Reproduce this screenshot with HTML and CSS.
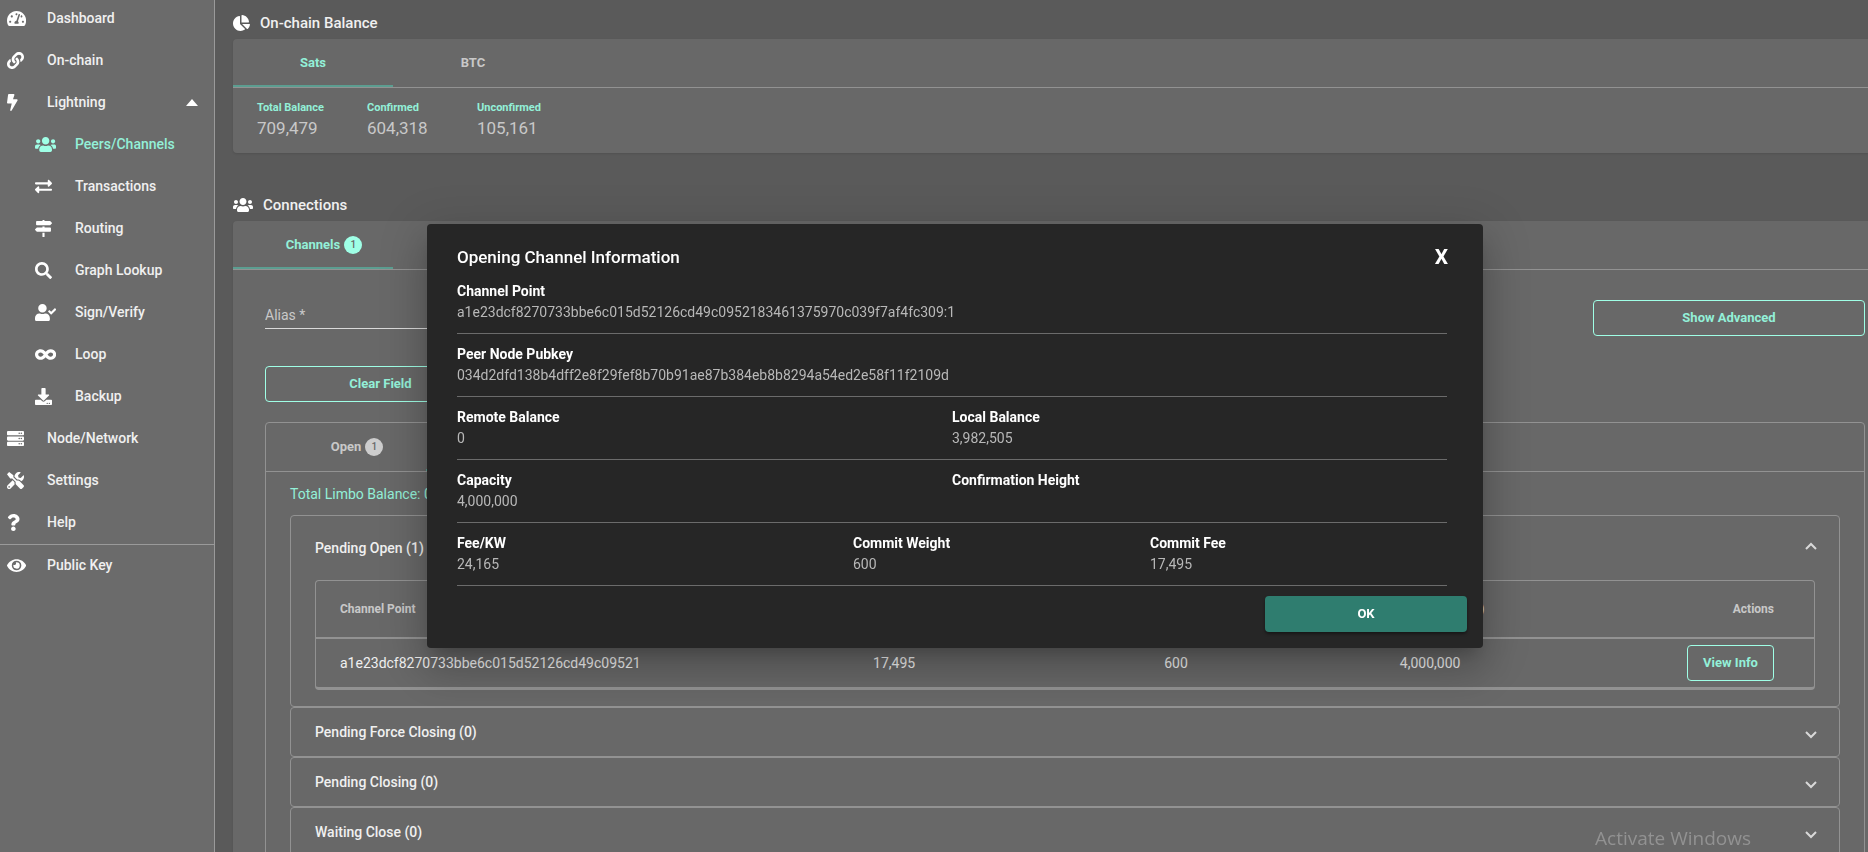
FILE: index.html
```html
<!DOCTYPE html>
<html lang="en">
<head>
<meta charset="utf-8">
<title>Peers/Channels</title>
<link rel="stylesheet" href="styles.css">
</head>
<body>
<div class="app">
  <nav class="sidebar">
    <a class="nav-item" href="#"><span class="nav-icon"><svg class="icon" viewBox="0 0 576 512"><path d="M288 32C128.94 32 0 160.94 0 320c0 52.8 14.25 102.26 39.06 144.8 5.61 9.62 16.3 15.2 27.44 15.2h443c11.14 0 21.83-5.58 27.44-15.2C561.75 422.26 576 372.8 576 320c0-159.06-128.94-288-288-288zm0 64c14.71 0 26.58 10.13 30.32 23.65-1.11 2.26-2.64 4.23-3.45 6.67l-9.22 27.67c-5.13 3.49-10.97 6.01-17.64 6.01-17.67 0-32-14.33-32-32S270.33 96 288 96zM96 384c-17.67 0-32-14.33-32-32s14.33-32 32-32 32 14.33 32 32-14.33 32-32 32zm48-160c-17.67 0-32-14.33-32-32s14.33-32 32-32 32 14.33 32 32-14.33 32-32 32zm246.77-72.41l-61.33 184C343.13 347.33 352 364.54 352 384c0 11.72-3.38 22.55-8.88 32H232.88c-5.5-9.45-8.88-20.28-8.88-32 0-33.94 26.5-61.43 59.9-63.59l61.34-184.01c4.17-12.56 17.73-19.45 30.36-15.17 12.57 4.19 19.35 17.79 15.17 30.36zm14.66 57.2l15.52-46.55c3.47-1.29 7.13-2.23 11.05-2.23 17.67 0 32 14.33 32 32s-14.33 32-32 32c-11.38-.01-20.89-6.28-26.57-15.22zM480 384c-17.67 0-32-14.33-32-32s14.33-32 32-32 32 14.33 32 32-14.33 32-32 32z"/></svg></span>Dashboard</a>
    <a class="nav-item" href="#"><span class="nav-icon"><svg class="icon" viewBox="0 0 512 512"><path d="M326.612 185.391c59.747 59.809 58.927 155.698.36 214.59-.11.12-.24.25-.36.37l-67.2 67.2c-59.27 59.27-155.699 59.262-214.96 0-59.27-59.26-59.27-155.7 0-214.96l37.106-37.106c9.84-9.84 26.786-3.3 27.294 10.606.648 17.722 3.826 35.527 9.69 52.721 1.986 5.822.567 12.262-3.783 16.612l-13.087 13.087c-28.026 28.026-28.905 73.66-1.155 101.96 28.024 28.579 74.086 28.749 102.325.51l67.2-67.19c28.191-28.191 28.073-73.757 0-101.83-3.701-3.694-7.429-6.564-10.341-8.569a16.037 16.037 0 0 1-6.947-12.606c-.396-10.567 3.348-21.456 11.698-29.806l21.054-21.055c5.521-5.521 14.182-6.199 20.584-1.731a152.482 152.482 0 0 1 20.522 17.197zM467.547 44.449c-59.261-59.262-155.69-59.27-214.96 0l-67.2 67.2c-.12.12-.25.25-.36.37-58.566 58.892-59.387 154.781.36 214.59a152.454 152.454 0 0 0 20.521 17.196c6.402 4.468 15.064 3.789 20.584-1.731l21.054-21.055c8.35-8.35 12.094-19.239 11.698-29.806a16.037 16.037 0 0 0-6.947-12.606c-2.912-2.005-6.64-4.875-10.341-8.569-28.073-28.073-28.191-73.639 0-101.83l67.2-67.19c28.239-28.239 74.3-28.069 102.325.51 27.75 28.3 26.872 73.934-1.155 101.96l-13.087 13.087c-4.35 4.35-5.769 10.79-3.783 16.612 5.864 17.194 9.042 34.999 9.69 52.721.509 13.906 17.454 20.446 27.294 10.606l37.106-37.106c59.271-59.259 59.271-155.699.001-214.959z"/></svg></span>On-chain</a>
    <a class="nav-item" href="#"><span class="nav-icon"><svg class="icon" viewBox="0 0 320 512"><path d="M296 160H180.6l42.6-129.8C227.2 15 215.7 0 200 0H56C44 0 33.8 8.9 32.2 20.8l-32 240C-1.7 275.2 9.5 288 24 288h118.7L96.6 482.5c-3.6 15.2 8 29.5 23.3 29.5 8.4 0 16.4-4.4 20.8-12l176-304c9.3-15.9-2.2-36-20.7-36z"/></svg></span>Lightning<svg class="caret" viewBox="0 0 12 7"><path d="M0 7L6 0l6 7z"/></svg></a>
    <a class="nav-item sub active" href="#"><span class="nav-icon"><svg class="icon" viewBox="0 0 640 512"><path d="M96 224c35.3 0 64-28.7 64-64s-28.7-64-64-64-64 28.7-64 64 28.7 64 64 64zm448 0c35.3 0 64-28.7 64-64s-28.7-64-64-64-64 28.7-64 64 28.7 64 64 64zm32 32h-64c-17.6 0-33.5 7.1-45.1 18.6 40.3 22.1 68.9 62 75.1 109.4h66c17.7 0 32-14.3 32-32v-32c0-35.3-28.7-64-64-64zm-256 0c61.9 0 112-50.1 112-112S381.9 32 320 32 208 82.1 208 144s50.1 112 112 112zm76.8 32h-8.3c-20.8 10-43.9 16-68.5 16s-47.6-6-68.5-16h-8.3C179.6 288 128 339.6 128 403.2V432c0 26.5 21.5 48 48 48h288c26.5 0 48-21.5 48-48v-28.8c0-63.6-51.6-115.2-115.2-115.2zm-223.7-13.4C161.5 263.1 145.6 256 128 256H64c-35.3 0-64 28.7-64 64v32c0 17.7 14.3 32 32 32h65.9c6.3-47.4 34.9-87.3 75.2-109.4z"/></svg></span>Peers/Channels</a>
    <a class="nav-item sub" href="#"><span class="nav-icon"><svg class="icon" viewBox="0 0 512 512"><path d="M0 168v-16c0-13.255 10.745-24 24-24h360V80c0-21.367 25.899-32.042 40.971-16.971l80 80c9.372 9.373 9.372 24.569 0 33.941l-80 80C409.956 271.982 384 261.456 384 240v-48H24c-13.255 0-24-10.745-24-24zm488 152H128v-48c0-21.314-25.862-32.08-40.971-16.971l-80 80c-9.372 9.373-9.372 24.569 0 33.941l80 80C102.057 463.997 128 453.437 128 432v-48h360c13.255 0 24-10.745 24-24v-16c0-13.255-10.745-24-24-24z"/></svg></span>Transactions</a>
    <a class="nav-item sub" href="#"><span class="nav-icon"><svg class="icon" viewBox="0 0 512 512"><path d="M507.31 84.69L464 41.37c-6-6-14.14-9.37-22.63-9.37H288V16c0-8.84-7.16-16-16-16h-32c-8.84 0-16 7.16-16 16v16H56c-13.25 0-24 10.75-24 24v80c0 13.25 10.75 24 24 24h385.37c8.49 0 16.62-3.37 22.63-9.37l43.31-43.31c6.25-6.26 6.25-16.38 0-22.63zM224 496c0 8.84 7.16 16 16 16h32c8.84 0 16-7.16 16-16V384h-64v112zm232-272H288v-32h-64v32H70.63c-8.49 0-16.62 3.37-22.63 9.37L4.69 276.69c-6.25 6.25-6.25 16.38 0 22.63L48 342.63c6 6 14.14 9.37 22.63 9.37H456c13.25 0 24-10.75 24-24v-80c0-13.25-10.75-24-24-24z"/></svg></span>Routing</a>
    <a class="nav-item sub" href="#"><span class="nav-icon"><svg class="icon" viewBox="0 0 512 512"><path d="M505 442.7L405.3 343c-4.5-4.5-10.6-7-17-7H372c27.6-35.3 44-79.7 44-128C416 93.1 322.9 0 208 0S0 93.1 0 208s93.1 208 208 208c48.3 0 92.7-16.4 128-44v16.3c0 6.4 2.5 12.5 7 17l99.7 99.7c9.4 9.4 24.6 9.4 33.9 0l28.3-28.3c9.4-9.4 9.4-24.6.1-34zM208 336c-70.7 0-128-57.2-128-128 0-70.7 57.2-128 128-128 70.7 0 128 57.2 128 128 0 70.7-57.2 128-128 128z"/></svg></span>Graph Lookup</a>
    <a class="nav-item sub" href="#"><span class="nav-icon"><svg class="icon" viewBox="0 0 640 512"><path d="M224 256c70.7 0 128-57.3 128-128S294.7 0 224 0 96 57.3 96 128s57.3 128 128 128zm89.6 32h-16.7c-22.2 10.2-46.9 16-72.9 16s-50.6-5.8-72.9-16h-16.7C60.2 288 0 348.2 0 422.4V464c0 26.5 21.5 48 48 48h352c26.5 0 48-21.5 48-48v-41.6c0-74.2-60.2-134.4-134.4-134.4zm323-128.4l-27.8-28.1c-4.6-4.7-12.1-4.7-16.8-.1l-104.8 104-45.5-45.8c-4.6-4.7-12.1-4.7-16.8-.1l-28.1 27.9c-4.7 4.6-4.7 12.1-.1 16.8l81.7 82.3c4.6 4.7 12.1 4.7 16.8.1l141.3-140.2c4.6-4.7 4.7-12.2.1-16.8z"/></svg></span>Sign/Verify</a>
    <a class="nav-item sub" href="#"><span class="nav-icon"><svg class="icon" viewBox="0 0 640 512"><path d="M471.1 96C405 96 353.3 137.3 320 174.6 286.7 137.3 235 96 168.9 96 75.8 96 0 167.8 0 256s75.8 160 168.9 160c66.1 0 117.8-41.3 151.1-78.6 33.3 37.3 85 78.6 151.1 78.6 93.1 0 168.9-71.8 168.9-160S564.2 96 471.1 96zM168.9 320c-40.2 0-72.9-28.7-72.9-64s32.7-64 72.9-64c38.2 0 73.4 36.1 94 64-20.4 27.6-55.9 64-94 64zm302.2 0c-38.2 0-73.4-36.1-94-64 20.4-27.6 55.9-64 94-64 40.2 0 72.9 28.7 72.9 64s-32.7 64-72.9 64z"/></svg></span>Loop</a>
    <a class="nav-item sub" href="#"><span class="nav-icon"><svg class="icon" viewBox="0 0 512 512"><path d="M216 0h80c13.3 0 24 10.7 24 24v168h87.7c17.8 0 26.7 21.5 14.1 34.1L269.7 378.3c-7.5 7.5-19.8 7.5-27.3 0L90.1 226.1c-12.6-12.6-3.7-34.1 14.1-34.1H192V24c0-13.3 10.7-24 24-24zm296 376v112c0 13.3-10.7 24-24 24H24c-13.3 0-24-10.7-24-24V376c0-13.3 10.7-24 24-24h146.7l49 49c20.1 20.1 52.5 20.1 72.6 0l49-49H488c13.3 0 24 10.7 24 24zm-124 88c0-11-9-20-20-20s-20 9-20 20 9 20 20 20 20-9 20-20zm64 0c0-11-9-20-20-20s-20 9-20 20 9 20 20 20 20-9 20-20z"/></svg></span>Backup</a>
    <a class="nav-item" href="#"><span class="nav-icon"><svg class="icon" viewBox="0 0 512 512"><path d="M480 160H32c-17.673 0-32-14.327-32-32V64c0-17.673 14.327-32 32-32h448c17.673 0 32 14.327 32 32v64c0 17.673-14.327 32-32 32zm-48-88c-13.255 0-24 10.745-24 24s10.745 24 24 24 24-10.745 24-24-10.745-24-24-24zm-64 0c-13.255 0-24 10.745-24 24s10.745 24 24 24 24-10.745 24-24-10.745-24-24-24zm112 248H32c-17.673 0-32-14.327-32-32v-64c0-17.673 14.327-32 32-32h448c17.673 0 32 14.327 32 32v64c0 17.673-14.327 32-32 32zm-48-88c-13.255 0-24 10.745-24 24s10.745 24 24 24 24-10.745 24-24-10.745-24-24-24zm-64 0c-13.255 0-24 10.745-24 24s10.745 24 24 24 24-10.745 24-24-10.745-24-24-24zm112 248H32c-17.673 0-32-14.327-32-32v-64c0-17.673 14.327-32 32-32h448c17.673 0 32 14.327 32 32v64c0 17.673-14.327 32-32 32zm-48-88c-13.255 0-24 10.745-24 24s10.745 24 24 24 24-10.745 24-24-10.745-24-24-24zm-64 0c-13.255 0-24 10.745-24 24s10.745 24 24 24 24-10.745 24-24-10.745-24-24-24z"/></svg></span>Node/Network</a>
    <a class="nav-item" href="#"><span class="nav-icon"><svg class="icon" viewBox="0 0 512 512"><path d="M501.1 395.7L384 278.6c-23.1-23.1-57.6-27.6-85.4-13.9L192 158.1V96L64 0 0 64l96 128h62.1l106.6 106.6c-13.6 27.8-9.2 62.3 13.9 85.4l117.1 117.1c14.6 14.6 38.2 14.6 52.7 0l52.7-52.7c14.5-14.6 14.5-38.2 0-52.7zM331.7 225c28.3 0 54.9 11 74.9 31l19.4 19.4c15.8-6.9 30.8-16.5 43.8-29.5 37.1-37.1 49.7-89.3 37.9-136.7-2.2-9-13.5-12.1-20.1-5.5l-74.4 74.4-67.9-11.3L334 98.9l74.4-74.4c6.6-6.6 3.4-17.9-5.7-20.2-47.4-11.7-99.6.9-136.6 37.9-28.5 28.5-41.9 66.1-41.2 103.6l82.1 82.1c8.1-1.9 16.5-2.9 24.7-2.9zm-103.9 82l-56.7-56.7L18.7 402.8c-25 25-25 65.5 0 90.5s65.5 25 90.5 0l123.6-123.6c-7.6-19.9-9.9-41.6-5-62.7zM64 472c-13.2 0-24-10.8-24-24 0-13.3 10.7-24 24-24s24 10.7 24 24c0 13.2-10.7 24-24 24z"/></svg></span>Settings</a>
    <a class="nav-item" href="#"><span class="nav-icon"><svg class="icon" viewBox="0 0 384 512"><path d="M202.021 0C122.202 0 70.503 32.703 29.914 91.026c-7.363 10.58-5.093 25.086 5.178 32.874l43.138 32.709c10.373 7.865 25.132 6.026 33.253-4.148 25.049-31.381 43.63-49.449 82.757-49.449 30.764 0 68.816 19.799 68.816 49.631 0 22.552-18.617 34.134-48.993 51.164-35.423 19.86-82.299 44.576-82.299 106.405V320c0 13.255 10.745 24 24 24h72.471c13.255 0 24-10.745 24-24v-5.773c0-42.86 125.268-44.645 125.268-160.627C377.504 66.256 286.902 0 202.021 0zM192 373.459c-38.196 0-69.271 31.075-69.271 69.271 0 38.195 31.075 69.27 69.271 69.27s69.271-31.075 69.271-69.271-31.075-69.27-69.271-69.27z"/></svg></span>Help</a>
    <hr class="nav-divider">
    <a class="nav-item" href="#"><span class="nav-icon"><svg class="icon" viewBox="0 0 576 512"><path d="M572.52 241.4C518.29 135.59 410.93 64 288 64S57.68 135.64 3.48 241.41a32.35 32.35 0 0 0 0 29.19C57.71 376.41 165.07 448 288 448s230.32-71.64 284.52-177.41a32.35 32.35 0 0 0 0-29.19zM288 400a144 144 0 1 1 144-144 143.93 143.93 0 0 1-144 144zm0-240a95.31 95.31 0 0 0-25.31 3.79 47.85 47.85 0 0 1-66.9 66.9A95.78 95.78 0 1 0 288 160z"/></svg></span>Public Key</a>
  </nav>

  <main class="main">
    <h2 class="section-title"><svg class="icon" viewBox="0 0 544 512"><path d="M527.79 288H290.5l158.03 158.03c6.04 6.04 15.98 6.53 22.19.68 38.7-36.46 65.32-85.61 73.13-140.86 1.34-9.46-6.51-17.85-16.06-17.85zm-15.83-64.8C503.72 103.74 408.26 8.28 288.8.04 279.68-.59 272 7.1 272 16.24V240h223.77c9.14 0 16.82-7.68 16.19-16.8zM224 288V50.71c0-9.55-8.39-17.4-17.84-16.06C86.99 51.49-4.1 155.6.14 280.37 4.5 408.51 114.83 513.59 243.03 511.98c50.4-.63 96.97-16.87 135.26-44.03 7.9-5.6 8.42-17.23 1.57-24.08L224 288z"/></svg>On-chain Balance</h2>
    <section class="card">
      <div class="tabs">
        <button class="tab selected" type="button">Sats</button>
        <button class="tab" type="button">BTC</button>
      </div>
      <dl class="balances">
        <div><dt>Total Balance</dt><dd>709,479</dd></div>
        <div><dt>Confirmed</dt><dd>604,318</dd></div>
        <div><dt>Unconfirmed</dt><dd>105,161</dd></div>
      </dl>
    </section>

    <h2 class="section-title connections"><svg class="icon" viewBox="0 0 640 512"><path d="M96 224c35.3 0 64-28.7 64-64s-28.7-64-64-64-64 28.7-64 64 28.7 64 64 64zm448 0c35.3 0 64-28.7 64-64s-28.7-64-64-64-64 28.7-64 64 28.7 64 64 64zm32 32h-64c-17.6 0-33.5 7.1-45.1 18.6 40.3 22.1 68.9 62 75.1 109.4h66c17.7 0 32-14.3 32-32v-32c0-35.3-28.7-64-64-64zm-256 0c61.9 0 112-50.1 112-112S381.9 32 320 32 208 82.1 208 144s50.1 112 112 112zm76.8 32h-8.3c-20.8 10-43.9 16-68.5 16s-47.6-6-68.5-16h-8.3C179.6 288 128 339.6 128 403.2V432c0 26.5 21.5 48 48 48h288c26.5 0 48-21.5 48-48v-28.8c0-63.6-51.6-115.2-115.2-115.2zm-223.7-13.4C161.5 263.1 145.6 256 128 256H64c-35.3 0-64 28.7-64 64v32c0 17.7 14.3 32 32 32h65.9c6.3-47.4 34.9-87.3 75.2-109.4z"/></svg>Connections</h2>
    <section class="card">
      <div class="tabs">
        <button class="tab selected" type="button"><span class="badged">Channels<span class="badge">1</span></span></button>
      </div>
      <div class="channels">
        <div class="form-row">
          <input class="alias" type="text" placeholder="Alias *" aria-label="Alias">
          <button class="btn outline advanced" type="button">Show Advanced</button>
        </div>
        <button class="btn outline clear" type="button">Clear Field</button>

        <div class="box">
          <div class="tabs">
            <button class="tab" type="button"><span class="badged">Open<span class="badge">1</span></span></button>
            <button class="tab selected" type="button" aria-label="Pending"></button>
          </div>
          <div class="pending">
            <p class="limbo">Total Limbo Balance: 0</p>
            <div class="panel">
              <button class="panel-head open" type="button">Pending Open (1)<svg class="chevron" viewBox="0 0 12 8"><path d="M1 7l5-5 5 5"/></svg></button>
              <div class="table-wrap">
                <table class="table">
                  <colgroup><col class="col-point"><col class="col-num"><col class="col-num"><col class="col-num"><col class="col-actions"></colgroup>
                  <thead>
                    <tr><th class="point">Channel Point</th><th>Commit Fee (Sats)</th><th>Commit Weight</th><th>Capacity (Sats)</th><th class="actions">Actions</th></tr>
                  </thead>
                  <tbody>
                    <tr><td class="point">a1e23dcf8270733bbe6c015d52126cd49c09521</td><td>17,495</td><td>600</td><td>4,000,000</td><td class="actions"><button class="btn outline view" type="button">View Info</button></td></tr>
                  </tbody>
                </table>
              </div>
            </div>
            <div class="panel"><button class="panel-head" type="button">Pending Force Closing (0)<svg class="chevron" viewBox="0 0 12 8"><path d="M1 1l5 5 5-5"/></svg></button></div>
            <div class="panel"><button class="panel-head" type="button">Pending Closing (0)<svg class="chevron" viewBox="0 0 12 8"><path d="M1 1l5 5 5-5"/></svg></button></div>
            <div class="panel"><button class="panel-head" type="button">Waiting Close (0)<svg class="chevron" viewBox="0 0 12 8"><path d="M1 1l5 5 5-5"/></svg></button></div>
          </div>
        </div>
      </div>
    </section>
  </main>
</div>

<div class="overlay">
  <div class="dialog" role="dialog" aria-labelledby="dialog-title">
    <header class="dialog-head">
      <h1 class="dialog-title" id="dialog-title">Opening Channel Information</h1>
      <button class="close" type="button" aria-label="Close">X</button>
    </header>
    <dl class="info">
      <div class="info-row"><div><dt>Channel Point</dt><dd>a1e23dcf8270733bbe6c015d52126cd49c0952183461375970c039f7af4fc309:1</dd></div></div>
      <div class="info-row"><div><dt>Peer Node Pubkey</dt><dd>034d2dfd138b4dff2e8f29fef8b70b91ae87b384eb8b8294a54ed2e58f11f2109d</dd></div></div>
      <div class="info-row halves"><div><dt>Remote Balance</dt><dd>0</dd></div><div><dt>Local Balance</dt><dd>3,982,505</dd></div></div>
      <div class="info-row halves"><div><dt>Capacity</dt><dd>4,000,000</dd></div><div><dt>Confirmation Height</dt><dd></dd></div></div>
      <div class="info-row thirds"><div><dt>Fee/KW</dt><dd>24,165</dd></div><div><dt>Commit Weight</dt><dd>600</dd></div><div><dt>Commit Fee</dt><dd>17,495</dd></div></div>
    </dl>
    <footer class="dialog-foot"><button class="btn ok" type="button">OK</button></footer>
  </div>
</div>
<div class="watermark">Activate Windows</div>
</body>
</html>
```
FILE: styles.css
```css
:root {
  --bg: #5a5a5a;
  --card: #686868;
  --line: #929292;
  --text: #f0f0f0;
  --muted: #c8c8c8;
  --mint: #93f0d8;
  --mint-line: #9fffe6;
}

* { box-sizing: border-box; }

body {
  margin: 0;
  height: 100vh;
  overflow: hidden;
  background: var(--bg);
  color: var(--text);
  font: 400 14px/20px Roboto, sans-serif;
}

button, input { font: inherit; color: inherit; }

button {
  padding: 0;
  border: 0;
  background: none;
  cursor: pointer;
}

dl, dd, p, h1, h2 { margin: 0; }

.app { display: flex; height: 100%; }

/* Sidebar */
.sidebar {
  flex: 0 0 215px;
  margin-top: -3px;
  background: #6b6b6b;
  border-right: 1px solid #9a9a9a;
}

.nav-item {
  display: flex;
  align-items: center;
  height: 42px;
  padding: 0 16px 0 7px;
  color: var(--text);
  font-weight: 500;
  text-decoration: none;
}

.nav-item.sub { padding-left: 35px; }
.nav-item.active { color: var(--mint); }
.nav-icon { display: flex; width: 40px; }

.icon { display: block; height: 17px; fill: #fff; }
.active .icon { fill: var(--mint-line); }

.caret { width: 12px; height: 7px; margin-left: auto; fill: #fff; }

.nav-divider {
  margin: 1px 0 -1px;
  border: 0;
  border-top: 1px solid #9a9a9a;
}

/* Main column */
.main { flex: 1; min-width: 0; padding: 7px 0 0 18px; }

.section-title {
  display: flex;
  align-items: center;
  gap: 10px;
  height: 32px;
  font-size: 15px;
  font-weight: 500;
}

.section-title .icon { height: 16px; }
.section-title.connections { margin-top: 36px; }

.card {
  background: var(--card);
  border-radius: 4px 0 0 4px;
  box-shadow: 0 1px 2px rgba(0, 0, 0, .1);
}

.tabs { display: flex; border-bottom: 1px solid var(--line); }

.tab {
  width: 160px;
  height: 48px;
  border-bottom: 2px solid transparent;
  border-top: 2px solid transparent;
  color: var(--muted);
  font-size: 13px;
  font-weight: 700;
}

.tab.selected { color: var(--mint); border-bottom-color: #5c9e91; }

.badged { position: relative; }

.badge {
  position: absolute;
  left: 100%;
  top: 50%;
  width: 18px;
  height: 18px;
  margin: -9px 0 0 4px;
  border-radius: 50%;
  background: #cdcdcd;
  color: #686868;
  font-size: 10px;
  font-weight: 500;
  line-height: 18px;
  text-align: center;
}

.selected .badge { background: var(--mint-line); }

.balances {
  display: grid;
  grid-template-columns: repeat(3, 110px);
  padding: 10px 24px 15px;
}

.balances dt { color: var(--mint); font-size: 11px; font-weight: 700; }
.balances dd { color: var(--muted); font-size: 17px; }

.channels { padding: 30px 3px 0 32px; }
.form-row { display: flex; justify-content: space-between; }

.alias {
  width: 25%;
  height: 29px;
  padding: 2px 0 0;
  border: 0;
  border-bottom: 1px solid #dadada;
  background: none;
  outline: 0;
}

.alias::placeholder { color: var(--muted); opacity: 1; }

.btn {
  height: 36px;
  border-radius: 4px;
  font-size: 13px;
  font-weight: 700;
}

.outline { border: 1px solid var(--mint-line); color: var(--mint); }
.advanced { width: 272px; }
.clear { display: block; width: 231px; margin: 30px 0 20px; }

.box {
  border: 1px solid var(--line);
  border-radius: 4px 4px 0 0;
}

.pending { padding: 12px 24px 0; }
.limbo { margin-bottom: 11px; color: var(--mint); }

.panel { border: 1px solid var(--line); border-radius: 4px; }

.panel-head {
  display: flex;
  align-items: center;
  justify-content: space-between;
  width: 100%;
  height: 48px;
  padding: 0 22px 0 24px;
  font-weight: 500;
}

.panel-head.open { height: 64px; }

/* The arrow sits toward the side it points to */
.chevron {
  width: 12px;
  height: 8px;
  margin-top: 6px;
  fill: none;
  stroke: #d8d8d8;
  stroke-width: 2;
}

.open .chevron { margin: 0 0 4px; }

.table-wrap {
  margin: 0 24px 16px;
  border: 1px solid var(--line);
  border-bottom-width: 3px;
  border-radius: 4px;
}

.table {
  width: 100%;
  border-collapse: separate;
  border-spacing: 0;
  table-layout: fixed;
}

.col-point { width: 23.4%; }
.col-num { width: 18.2%; }

.table th {
  height: 58px;
  padding: 0;
  border-bottom: 2px solid var(--line);
  color: var(--muted);
  font-size: 12px;
  font-weight: 700;
  text-align: right;
}

.table td { height: 48px; padding: 0 24px 0 0; text-align: right; white-space: nowrap; }
.table .point { padding-left: 24px; text-align: left; }
.table .actions { padding-right: 40px; }
.view { width: 87px; }

/* Dialog */
.overlay {
  position: fixed;
  inset: 0;
  display: flex;
  align-items: center;
  justify-content: center;
  padding: 20px 0 0 42px;
}

.dialog {
  width: 1056px;
  max-width: 90vw;
  border-radius: 4px;
  background: #262626;
  box-shadow: 0 11px 15px -7px rgba(0, 0, 0, .2), 0 24px 38px 3px rgba(0, 0, 0, .14), 0 9px 46px 8px rgba(0, 0, 0, .12);
}

.dialog-head {
  display: flex;
  align-items: center;
  justify-content: space-between;
  padding: 21px 35px 11px 30px;
}

.dialog-title { color: #fff; font-size: 17px; font-weight: 500; line-height: 24px; }
.close { color: #fff; font-size: 21px; font-weight: 700; line-height: 24px; }

.info { padding: 0 36px 0 30px; }

.info-row {
  display: grid;
  height: 63px;
  border-bottom: 1px solid #6b6b6b;
}

.info-row:first-child { height: 54px; }
.info-row > div { padding-top: 10px; }
.info-row:first-child > div { padding-top: 1px; }
.halves { grid-template-columns: 1fr 1fr; }
.thirds { grid-template-columns: 4fr 3fr 3fr; }
.info dt { color: #fff; font-weight: 700; line-height: 21px; }
.info dd { color: #b8b8b8; line-height: 21px; }

.dialog-foot { display: flex; justify-content: flex-end; padding: 10px 16px 16px; }

.ok {
  width: 202px;
  background: #2f7d6f;
  color: #fff;
  box-shadow: 0 2px 3px rgba(0, 0, 0, .4);
}

.watermark {
  position: fixed;
  right: 117px;
  bottom: 0;
  color: #929292;
  font: 19px/28px "Open Sans", sans-serif;
}
```
